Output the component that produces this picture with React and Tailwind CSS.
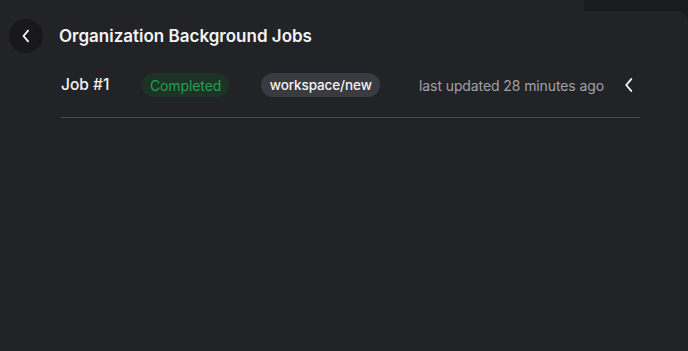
import React from "react";

export default function App() {
  return (
    <div className="relative w-[688px] h-[351px] overflow-hidden bg-[#222327] text-white" style={{ fontFamily: "Inter, 'Noto Sans', sans-serif" }}>
      <div className="absolute right-0 top-0 w-[104px] h-[11px] bg-[#1a1b1f]" />
      <div className="absolute right-0 top-[11px] w-[10px] h-[10px] bg-[#1a1b1f]">
        <div className="w-full h-full bg-[#222327] rounded-tr-[10px]" />
      </div>
      <div className="flex items-center pl-[9px] pt-[19px]">
        <button className="w-[34px] h-[34px] rounded-full bg-[#18181b] flex items-center justify-center">
          <svg width="20" height="20" viewBox="0 0 24 24" fill="none" stroke="#f4f4f5" strokeWidth="2.2" strokeLinecap="round" strokeLinejoin="round">
            <path d="M14.5 5.5l-5.5 6.5 5.5 6.5" />
          </svg>
        </button>
        <h1 className="ml-[16px] mt-[2px] text-[17px] font-semibold text-[#f4f4f5] whitespace-nowrap">Organization Background Jobs</h1>
      </div>
      <div className="ml-[61px] w-[579px] mt-[20px] flex items-center h-[24px] whitespace-nowrap">
        <span className="text-[15.5px] font-medium text-[#f4f4f5] w-[81px]">Job #1</span>
        <span className="h-[24px] w-[88px] rounded-full bg-[#1d3326] text-[#22a04f] text-[14px] tracking-[-0.1px] flex items-center justify-center">Completed</span>
        <span className="ml-[32px] h-[24px] w-[119px] rounded-full bg-[#3a3b40] text-[#f4f4f5] text-[13.5px] tracking-[-0.1px] font-medium flex items-center justify-center">workspace/new</span>
        <span className="ml-[39px] w-[184px] text-[14px] tracking-[-0.1px] text-[#a1a1aa]">last updated 28 minutes ago</span>
        <svg className="ml-[15px]" width="22" height="22" viewBox="0 0 24 24" fill="none" stroke="#f4f4f5" strokeWidth="2" strokeLinecap="round" strokeLinejoin="round">
          <path d="M14.5 5.5l-5.5 6.5 5.5 6.5" />
        </svg>
      </div>
      <div className="ml-[61px] w-[579px] mt-[20px] h-px bg-[#4a4b50]" />
    </div>
  );
}
